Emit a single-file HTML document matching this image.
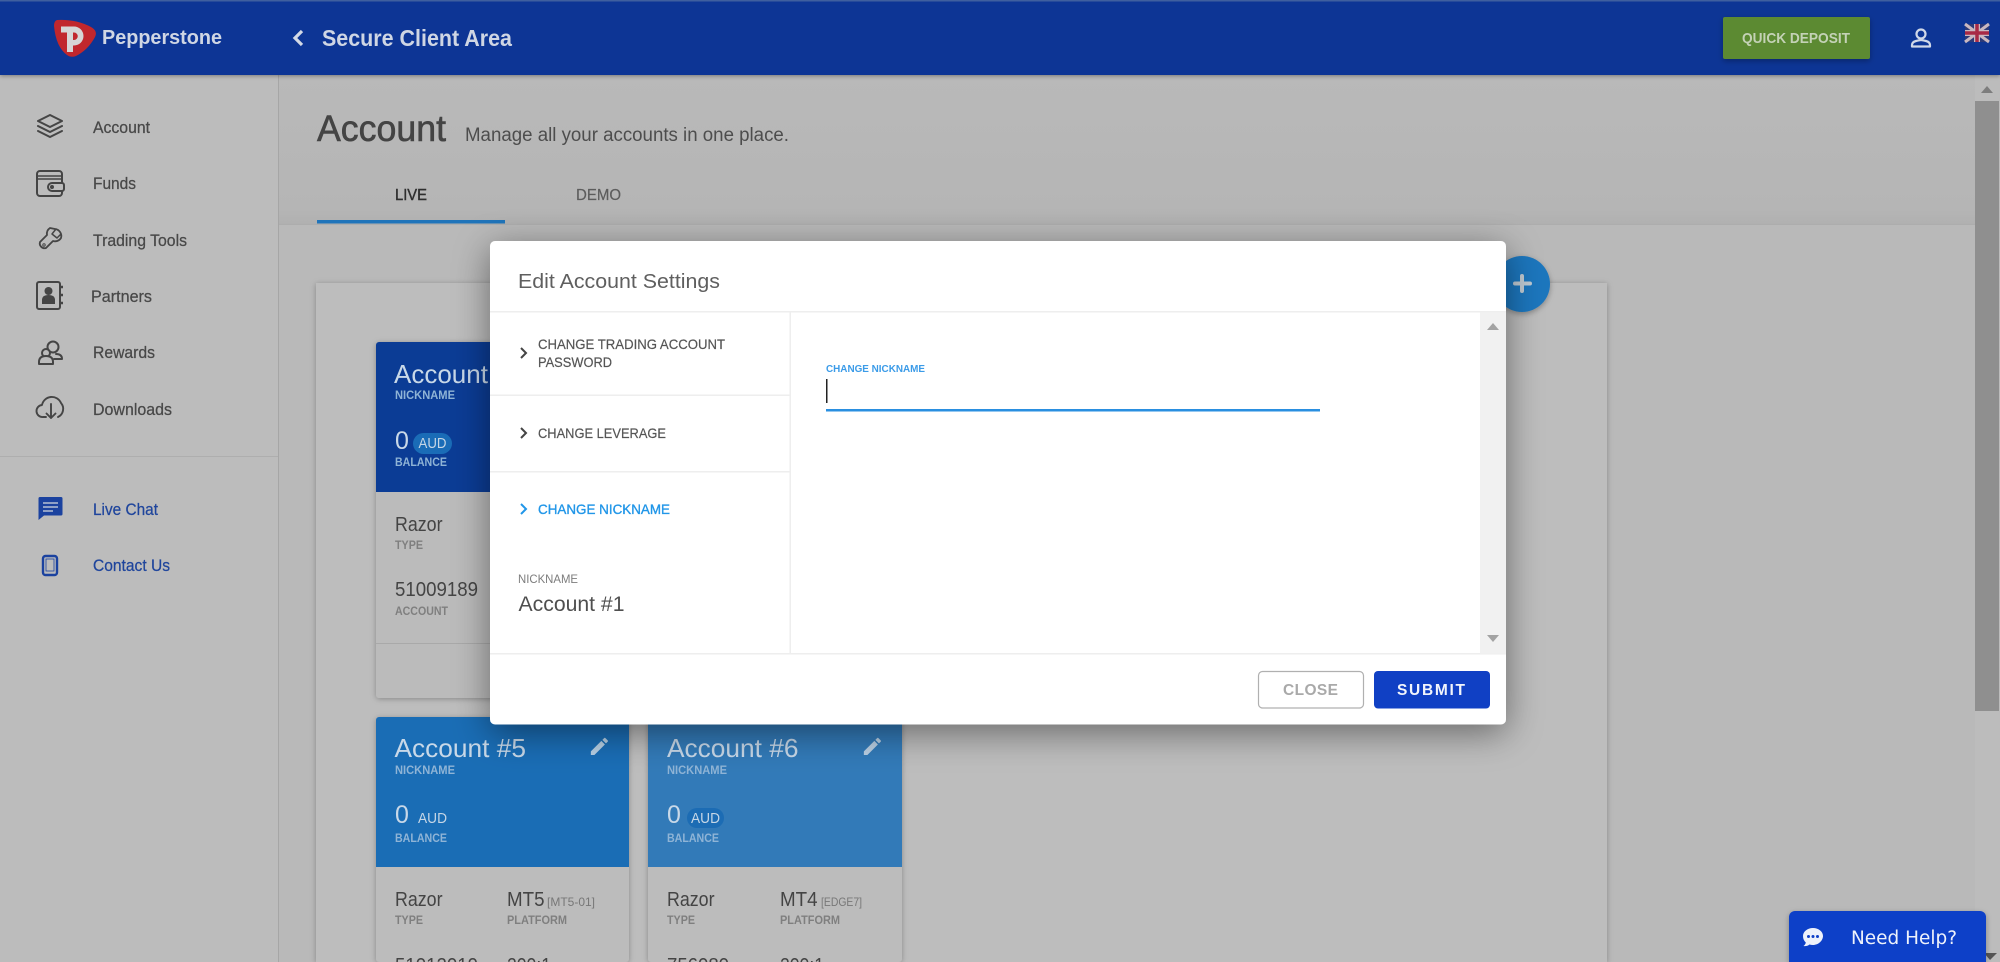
<!DOCTYPE html>
<html lang="en"><head><meta charset="utf-8"><title>Pepperstone - Secure Client Area</title>
<style>
html,body{margin:0;padding:0;width:2000px;height:962px;overflow:hidden;background:#bbb}
svg{display:block;position:absolute;left:0;top:0}
text{font-family:"Liberation Sans",sans-serif}
.nav{font-size:16.5px;fill:#484848;stroke:#484848;stroke-width:.25}
.navb{font-size:16.5px;fill:#1f459c;stroke:#1f459c;stroke-width:.25}
.lab{font-size:12px;font-weight:bold;fill:#7f7f7f}
.labw{font-size:12px;font-weight:bold;fill:#8fb4d6}
.big{font-size:26px;fill:#c8d8e8}
.val{font-size:20px;fill:#444}
.row{font-size:14px;fill:#555;stroke:#555;stroke-width:.2}
.ic{fill:none;stroke:#454545;stroke-width:2;stroke-linejoin:round;stroke-linecap:round}
</style></head><body>
<svg width="2000" height="962" viewBox="0 0 2000 962" xmlns="http://www.w3.org/2000/svg">
<defs>
<linearGradient id="mainTop" x1="0" y1="0" x2="0" y2="1"><stop offset="0" stop-color="#b9b9b9"/><stop offset=".9" stop-color="#b5b5b5"/><stop offset="1" stop-color="#b0b0b0"/></linearGradient>
<filter id="dlg" x="-10%" y="-15%" width="120%" height="135%"><feDropShadow dx="0" dy="8" stdDeviation="18" flood-color="#000" flood-opacity=".45"/></filter>
<filter id="card" x="-10%" y="-10%" width="120%" height="120%"><feDropShadow dx="0" dy="1" stdDeviation="3" flood-color="#000" flood-opacity=".28"/></filter>
<filter id="hdr" x="-1%" y="-20%" width="102%" height="150%"><feDropShadow dx="0" dy="1" stdDeviation="2" flood-color="#000" flood-opacity=".35"/></filter>
<filter id="soft" x="-20%" y="-20%" width="140%" height="140%"><feDropShadow dx="0" dy="2" stdDeviation="3" flood-color="#000" flood-opacity=".3"/></filter>
<clipPath id="page"><rect width="2000" height="962"/></clipPath>
</defs>
<g clip-path="url(#page)">

<!-- page background -->
<rect width="2000" height="962" fill="#bbbbbb"/>
<rect x="279" y="75" width="1696" height="150" fill="url(#mainTop)"/>
<rect x="279" y="224" width="1696" height="1" fill="#adadad"/>
<rect x="279" y="225" width="1696" height="737" fill="#b9b9b9"/>

<!-- sidebar -->
<rect x="0" y="75" width="279" height="887" fill="#bcbcbc"/>
<rect x="278" y="75" width="1" height="887" fill="#a6a6a6"/>
<rect x="0" y="456" width="278" height="1" fill="#aeaeae"/>

<g class="ic">
<path d="M50 115L62 121L50 127L38 121Z"/><path d="M38 126L50 132L62 126"/><path d="M38 131L50 137L62 131"/>
<rect x="37" y="171" width="25" height="25" rx="3"/><path d="M37 176H62M37 179H62" stroke-width="1.6"/><path d="M62 183H52a4 4 0 0 0 0 8H62a2 2 0 0 0 2-2v-4a2 2 0 0 0-2-2Z" fill="#bcbcbc"/><circle cx="52" cy="187" r="1" fill="#454545"/>
<path d="M55 229a7 7 0 0 1 6 9a7 7 0 0 1-8 3l-7 7a4.8 4.8 0 0 1-6-6l7-7a7 7 0 0 1 3-7Z" stroke-width="1.8"/><path d="M56 229L52 234L57 238L61 234" stroke-width="1.5"/><circle cx="44" cy="245" r="1.2" stroke-width="1"/>
<rect x="37" y="282" width="23" height="27" rx="2"/><path d="M61 287H63M61 295H63M61 303H63" stroke-width="2.4" stroke-linecap="butt"/>
</g>
<circle cx="48.500" cy="291" r="4" fill="#454545"/><path d="M42 304v-4q0-5 6.500-5t6.500 5v4Z" fill="#454545"/>
<g class="ic" stroke-width="2.400">
<circle cx="53" cy="347" r="5.500"/><path d="M56 354q6 0 6 5h-8"/><circle cx="46" cy="353" r="4" fill="#bcbcbc"/><path d="M39 364v-2q0-6 7-6t7 6v2Z" fill="#bcbcbc"/>
</g>
<g class="ic">
<path d="M46 417H43a6 6 0 0 1-1-12a10 10 0 0 1 19-2a9 9 0 0 1-3 14" stroke-width="1.9"/><path d="M51 404V418M46.500 413.500L51 418L55.500 413.500" stroke-width="1.9"/>
</g>
<path d="M40 497H61a1.500 1.500 0 0 1 1.500 1.500V514a1.500 1.500 0 0 1-1.500 1.500H44L38.500 520V498.500A1.500 1.500 0 0 1 40 497Z" fill="#1b429f"/>
<path d="M43 503H58M43 507H58M43 511H53" stroke="#b6bfd3" stroke-width="1.600"/>
<rect x="43" y="556" width="14" height="19" rx="2.500" fill="none" stroke="#1b429f" stroke-width="2.400"/><rect x="46" y="559" width="8" height="12" fill="none" stroke="#1b429f" stroke-width=".8"/>

<text class="nav" x="93" y="133" textLength="57" lengthAdjust="spacingAndGlyphs">Account</text>
<text class="nav" x="93" y="189" textLength="43" lengthAdjust="spacingAndGlyphs">Funds</text>
<text class="nav" x="93" y="246" textLength="94" lengthAdjust="spacingAndGlyphs">Trading Tools</text>
<text class="nav" x="91" y="302" textLength="61" lengthAdjust="spacingAndGlyphs">Partners</text>
<text class="nav" x="93" y="358" textLength="62" lengthAdjust="spacingAndGlyphs">Rewards</text>
<text class="nav" x="93" y="415" textLength="79" lengthAdjust="spacingAndGlyphs">Downloads</text>
<text class="navb" x="93" y="515" textLength="65" lengthAdjust="spacingAndGlyphs">Live Chat</text>
<text class="navb" x="93" y="571" textLength="77" lengthAdjust="spacingAndGlyphs">Contact Us</text>

<!-- page heading -->
<text x="317" y="141" font-size="37" fill="#444" stroke="#444" stroke-width=".6" textLength="129" lengthAdjust="spacingAndGlyphs">Account</text>
<text x="465" y="141" font-size="19" fill="#4d4d4d" textLength="324" lengthAdjust="spacingAndGlyphs">Manage all your accounts in one place.</text>
<text x="395" y="200" font-size="16" fill="#2f2f2f" stroke="#2f2f2f" stroke-width=".4" textLength="32" lengthAdjust="spacingAndGlyphs">LIVE</text>
<text x="576" y="200" font-size="16" fill="#5c5c5c" stroke="#5c5c5c" stroke-width=".2" textLength="45" lengthAdjust="spacingAndGlyphs">DEMO</text>
<rect x="317" y="220" width="188" height="3.500" fill="#1f74ba"/>

<!-- accounts panel -->
<rect x="316" y="283" width="1291" height="679" fill="#bdbdbd" filter="url(#card)"/>

<!-- card 1 -->
<g filter="url(#card)"><rect x="376" y="342" width="253" height="356" rx="3" fill="#bbbbbb"/></g>
<path d="M376 492V345a3 3 0 0 1 3-3H629V492Z" fill="#0b3c95"/>
<text class="big" x="394" y="383">Account #1</text>
<text class="labw" x="395" y="399" textLength="60" lengthAdjust="spacingAndGlyphs">NICKNAME</text>
<text x="395" y="449" font-size="25" fill="#c8d8e8">0</text>
<rect x="413" y="433" width="39" height="21" rx="10.500" fill="#1a6cb7"/>
<text x="418.500" y="448" font-size="14.500" fill="#c5d6e6" textLength="28" lengthAdjust="spacingAndGlyphs">AUD</text>
<text class="labw" x="395" y="466" textLength="52" lengthAdjust="spacingAndGlyphs">BALANCE</text>
<text class="val" x="395" y="531" textLength="47.500" lengthAdjust="spacingAndGlyphs">Razor</text>
<text class="lab" x="395" y="549" textLength="28" lengthAdjust="spacingAndGlyphs">TYPE</text>
<text class="val" x="395" y="596" textLength="83" lengthAdjust="spacingAndGlyphs">51009189</text>
<text class="lab" x="395" y="615" textLength="53" lengthAdjust="spacingAndGlyphs">ACCOUNT</text>
<rect x="376" y="643" width="253" height="1" fill="#a9a9a9"/>

<!-- card 5 -->
<g filter="url(#card)"><rect x="376" y="717" width="253" height="245" rx="3" fill="#bcbcbc"/></g>
<path d="M376 867V720a3 3 0 0 1 3-3H629V867Z" fill="#1a6db5"/>
<text class="big" x="394.500" y="757" textLength="131.500" lengthAdjust="spacingAndGlyphs">Account #5</text>
<text class="labw" x="395" y="774" textLength="60" lengthAdjust="spacingAndGlyphs">NICKNAME</text>
<text x="395" y="823" font-size="25" fill="#c8d8e8">0</text>
<text x="418" y="823" font-size="14.500" fill="#c5d6e6" textLength="29" lengthAdjust="spacingAndGlyphs">AUD</text>
<text class="labw" x="395" y="842" textLength="52" lengthAdjust="spacingAndGlyphs">BALANCE</text>
<path transform="translate(588 735) scale(.95)" fill="#b7cfe4" d="M3 17.250V21h3.750L17.810 9.940l-3.750-3.750L3 17.250zM20.710 7.040a1 1 0 0 0 0-1.410l-2.340-2.340a1 1 0 0 0-1.410 0l-1.830 1.830 3.750 3.750 1.830-1.830z"/>
<text class="val" x="395" y="906" textLength="47.500" lengthAdjust="spacingAndGlyphs">Razor</text>
<text class="lab" x="395" y="924" textLength="28" lengthAdjust="spacingAndGlyphs">TYPE</text>
<text class="val" x="507" y="906" textLength="37.500" lengthAdjust="spacingAndGlyphs">MT5</text>
<text x="547" y="906" font-size="12" fill="#777" textLength="48" lengthAdjust="spacingAndGlyphs">[MT5-01]</text>
<text class="lab" x="507" y="924" textLength="60" lengthAdjust="spacingAndGlyphs">PLATFORM</text>
<text class="val" x="395" y="972" textLength="83" lengthAdjust="spacingAndGlyphs">51012019</text>
<text class="val" x="507" y="972" textLength="44" lengthAdjust="spacingAndGlyphs">200:1</text>

<!-- card 6 -->
<g filter="url(#card)"><rect x="648" y="717" width="254" height="245" rx="3" fill="#bcbcbc"/></g>
<path d="M648 867V720a3 3 0 0 1 3-3H902V867Z" fill="#327ab8"/>
<text class="big" x="667" y="757" textLength="131.500" lengthAdjust="spacingAndGlyphs">Account #6</text>
<text class="labw" x="667" y="774" textLength="60" lengthAdjust="spacingAndGlyphs">NICKNAME</text>
<text x="667" y="823" font-size="25" fill="#c8d8e8">0</text>
<rect x="687" y="808" width="37" height="20" rx="10" fill="#1c6cb4"/>
<text x="691" y="823" font-size="14.500" fill="#c5d6e6" textLength="29" lengthAdjust="spacingAndGlyphs">AUD</text>
<text class="labw" x="667" y="842" textLength="52" lengthAdjust="spacingAndGlyphs">BALANCE</text>
<path transform="translate(861 735) scale(.95)" fill="#bad0e4" d="M3 17.250V21h3.750L17.810 9.940l-3.750-3.750L3 17.250zM20.710 7.040a1 1 0 0 0 0-1.410l-2.340-2.340a1 1 0 0 0-1.410 0l-1.830 1.830 3.750 3.750 1.830-1.830z"/>
<text class="val" x="667" y="906" textLength="47.500" lengthAdjust="spacingAndGlyphs">Razor</text>
<text class="lab" x="667" y="924" textLength="28" lengthAdjust="spacingAndGlyphs">TYPE</text>
<text class="val" x="780" y="906" textLength="37.500" lengthAdjust="spacingAndGlyphs">MT4</text>
<text x="821" y="906" font-size="12" fill="#777" textLength="41" lengthAdjust="spacingAndGlyphs">[EDGE7]</text>
<text class="lab" x="780" y="924" textLength="60" lengthAdjust="spacingAndGlyphs">PLATFORM</text>
<text class="val" x="667" y="972" textLength="62" lengthAdjust="spacingAndGlyphs">756080</text>
<text class="val" x="780" y="972" textLength="44" lengthAdjust="spacingAndGlyphs">200:1</text>

<!-- add button -->
<circle cx="1522" cy="284" r="28" fill="#1d76bd" filter="url(#soft)"/>
<path d="M1515 283.500H1530M1522 276V291" stroke="#bfc9d1" stroke-width="4" stroke-linecap="round"/>

<!-- page scrollbar -->
<rect x="1975" y="75" width="25" height="887" fill="#bcbcbc"/>
<path d="M1981 93L1987 86L1993 93Z" fill="#7d7d7d"/>
<rect x="1975" y="101" width="24" height="610" fill="#8f8f8f"/>
<path d="M1984 953L1997 953L1990 960Z" fill="#555"/>

<!-- header -->
<rect x="0" y="1" width="2000" height="74" fill="#0a3595" filter="url(#hdr)"/>
<rect x="0" y="0" width="2000" height="1.500" fill="#3f5f9f"/>
<path d="M57 20Q76 19 91 27Q98 31 95 37Q88 50 76 56Q71 58 67 55Q56 47 54 26Q54 21 57 20Z" fill="#c1272d"/>
<path fill="#d6d6d6" fill-rule="evenodd" d="M61 26.500H74a9.500 9.500 0 0 1 0 19H73V52H67V32.500H61ZM73 32.500V40H74a3.700 3.700 0 0 0 0-7.500Z"/>
<text x="102" y="44" font-size="20.500" font-weight="bold" fill="#cfd6e4" textLength="120" lengthAdjust="spacingAndGlyphs">Pepperstone</text>
<path d="M302 31L295 38L302 45" fill="none" stroke="#d3d9e6" stroke-width="3.200"/>
<text x="322" y="46" font-size="23.500" font-weight="bold" fill="#cfd6e4" textLength="190" lengthAdjust="spacingAndGlyphs">Secure Client Area</text>

<rect x="1723" y="17" width="147" height="42" rx="2" fill="#5c8a32" filter="url(#soft)"/>
<text x="1742" y="43" font-size="15" font-weight="bold" fill="#c4d2b6" textLength="108" lengthAdjust="spacingAndGlyphs">QUICK DEPOSIT</text>

<circle cx="1921" cy="34" r="4.500" fill="none" stroke="#d0d8e8" stroke-width="2.200"/>
<path d="M1912 46.500v-1.500q0-3 4-4t5-1t5 1t4 4v1.500Z" fill="none" stroke="#d0d8e8" stroke-width="2.200" stroke-linejoin="round"/>

<rect x="1965" y="24" width="24" height="18" rx="2" fill="#2c3a78"/>
<path d="M1965 24L1989 42M1989 24L1965 42" stroke="#c9b8c0" stroke-width="3"/>
<path d="M1977 24V42M1965 33H1989" stroke="#c9b8c0" stroke-width="6"/>
<path d="M1977 24V42M1965 33H1989" stroke="#a82a45" stroke-width="3.500"/>

<!-- dialog -->
<rect x="490" y="241" width="1016" height="483.500" rx="5" fill="#fff" filter="url(#dlg)"/>
<text x="518" y="288" font-size="20.500" fill="#5f5f5f" textLength="202" lengthAdjust="spacingAndGlyphs">Edit Account Settings</text>
<rect x="490" y="311" width="1016" height="1.500" fill="#eeeeee"/>
<rect x="789.500" y="312" width="1.500" height="342" fill="#eeeeee"/>
<rect x="490" y="394.500" width="300" height="1.500" fill="#eeeeee"/>
<rect x="490" y="471" width="300" height="1.500" fill="#eeeeee"/>
<rect x="490" y="653" width="1016" height="1.500" fill="#eeeeee"/>

<path d="M521 348L526 353L521 358" fill="none" stroke="#444" stroke-width="2"/>
<text class="row" x="538" y="349" textLength="187" lengthAdjust="spacingAndGlyphs">CHANGE TRADING ACCOUNT</text>
<text class="row" x="538" y="367" textLength="74" lengthAdjust="spacingAndGlyphs">PASSWORD</text>
<path d="M521 428L526 433L521 438" fill="none" stroke="#444" stroke-width="2"/>
<text class="row" x="538" y="438" textLength="128" lengthAdjust="spacingAndGlyphs">CHANGE LEVERAGE</text>
<path d="M521 504L526 509L521 514" fill="none" stroke="#2196e8" stroke-width="2"/>
<text x="538" y="514" font-size="14" fill="#2196e8" stroke="#2196e8" stroke-width=".35" textLength="132" lengthAdjust="spacingAndGlyphs">CHANGE NICKNAME</text>
<text x="518" y="583" font-size="12" fill="#7d7d7d" textLength="60" lengthAdjust="spacingAndGlyphs">NICKNAME</text>
<text x="518.500" y="611" font-size="21.500" fill="#4f4f4f" textLength="106" lengthAdjust="spacingAndGlyphs">Account #1</text>

<text x="826" y="372" font-size="10" font-weight="bold" fill="#3b9be8" textLength="99" lengthAdjust="spacingAndGlyphs">CHANGE NICKNAME</text>
<rect x="826" y="379" width="1.500" height="24" fill="#222"/>
<rect x="826" y="409" width="494" height="2.500" fill="#2a8fe0"/>

<rect x="1480" y="312.500" width="26" height="341" fill="#f1f1f1"/>
<path d="M1487 330L1493 323L1499 330Z" fill="#a3a3a3"/>
<path d="M1487 635L1493 642L1499 635Z" fill="#a3a3a3"/>

<rect x="1258.500" y="671.500" width="105" height="36.500" rx="4" fill="#fff" stroke="#b0b0b0" stroke-width="1.200"/>
<text x="1283" y="695" font-size="15.500" font-weight="bold" fill="#a9a9a9" textLength="55" lengthAdjust="spacing">CLOSE</text>
<rect x="1374" y="671" width="116" height="37.500" rx="4" fill="#1040c4"/>
<text x="1397" y="695" font-size="15.500" font-weight="bold" fill="#f2f5fc" textLength="68" lengthAdjust="spacing">SUBMIT</text>

<!-- help widget -->
<path d="M1789 962V917a6 6 0 0 1 6-6H1980a6 6 0 0 1 6 6V962Z" fill="#1040c8" filter="url(#soft)"/>
<path d="M1813 928c5.500 0 10 3.500 10 8s-4.500 9-10 9q-2 0-3.500-.5q-2.500 2-6 1.500q2-1.500 2.300-3.500q-2.800-2.500-2.800-6.500c0-4.500 4.500-8 10-8Z" fill="#eef2fb"/>
<circle cx="1808.500" cy="936.500" r="1.500" fill="#1040c8"/><circle cx="1813" cy="936.500" r="1.500" fill="#1040c8"/><circle cx="1817.500" cy="936.500" r="1.500" fill="#1040c8"/>
<text x="1851" y="944" style="font-family:'DejaVu Sans',sans-serif" font-size="18.500" fill="#eef2fb" textLength="106" lengthAdjust="spacingAndGlyphs">Need Help?</text>
</g>
</svg>
</body></html>
